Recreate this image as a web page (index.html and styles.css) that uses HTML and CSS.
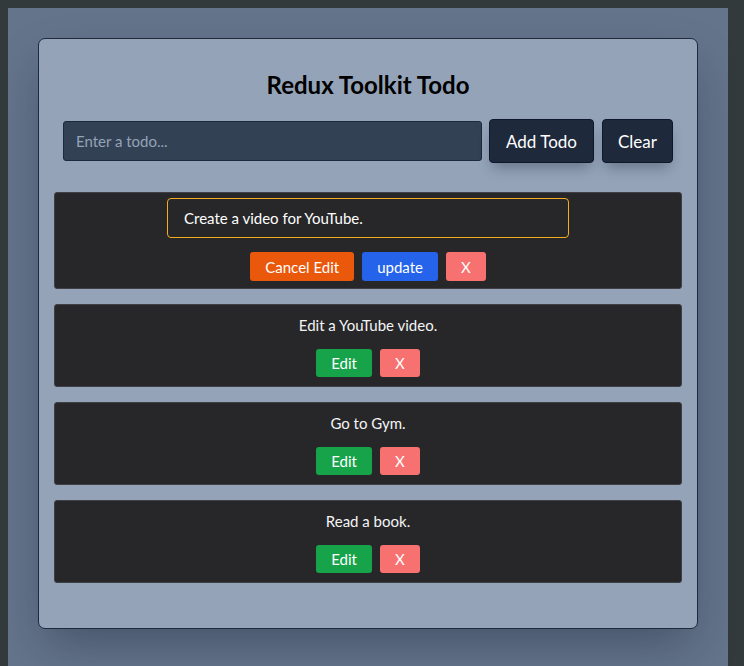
FILE: index.html
```html
<!DOCTYPE html>
<html lang="en">
<head>
<meta charset="utf-8">
<title>Redux Toolkit Todo</title>
<link rel="stylesheet" href="styles.css">
</head>
<body>
<div class="page">
  <div class="card">
    <h1 class="title">Redux Toolkit Todo</h1>
    <form class="add-form">
      <input class="add-input" type="text" placeholder="Enter a todo...">
      <button type="button" class="btn-dark">Add Todo</button>
      <button type="button" class="btn-dark">Clear</button>
    </form>
    <ul class="todo-list">
      <li class="todo editing">
        <input class="edit-input" type="text" value="Create a video for YouTube.">
        <div class="actions">
          <button type="button" class="btn btn-orange">Cancel Edit</button>
          <button type="button" class="btn btn-blue">update</button>
          <button type="button" class="btn btn-red">X</button>
        </div>
      </li>
      <li class="todo">
        <p class="todo-text">Edit a YouTube video.</p>
        <div class="actions">
          <button type="button" class="btn btn-green">Edit</button>
          <button type="button" class="btn btn-red">X</button>
        </div>
      </li>
      <li class="todo">
        <p class="todo-text">Go to Gym.</p>
        <div class="actions">
          <button type="button" class="btn btn-green">Edit</button>
          <button type="button" class="btn btn-red">X</button>
        </div>
      </li>
      <li class="todo">
        <p class="todo-text">Read a book.</p>
        <div class="actions">
          <button type="button" class="btn btn-green">Edit</button>
          <button type="button" class="btn btn-red">X</button>
        </div>
      </li>
    </ul>
  </div>
</div>
</body>
</html>
```
FILE: styles.css
```css
* { box-sizing: border-box; }
html, body { height: 100%; }
body {
  margin: 8px;
  background: #323a3c;
  font-family: "Lato", "Noto Sans", sans-serif;
  overflow: hidden;
}
.page {
  width: 720px;
  min-height: 658px;
  background: #64748b;
  padding: 30px;
}
.card {
  background: #94a3b8;
  border: 1px solid #1e293b;
  border-radius: 7px;
  padding: 0 15px 45px;
  box-shadow: 0 22px 45px -8px rgba(15, 23, 42, 0.35);
}
.title {
  margin: 0;
  padding-top: 31px;
  height: 80px;
  text-align: center;
  font-size: 24px;
  font-weight: 700;
  color: #000;
  line-height: 30px;
}
.add-form {
  display: flex;
  align-items: center;
  gap: 7px;
  margin: 0 9px;
  height: 44px;
}
.add-input {
  flex: 0 0 419px;
  height: 40px;
  background: #334155;
  border: 1px solid #1e293b;
  border-radius: 3px;
  padding: 0 12px;
  font-family: inherit;
  font-size: 15px;
  color: #e5e7eb;
  outline: none;
}
.add-input::placeholder { color: #94a3b8; }
.btn-dark {
  flex: 0 0 auto;
  white-space: nowrap;
  height: 44px;
  padding: 0 16px;
  margin-right: 1px;
  background: #1e293b;
  color: #fff;
  border: 1px solid #0f172a;
  border-radius: 4px;
  font-family: inherit;
  font-size: 17px;
  box-shadow: 0 8px 14px -4px rgba(15, 23, 42, 0.35);
}
.btn-dark:last-child { padding: 0 15px; margin-right: 0; }
.todo-list {
  list-style: none;
  margin: 29px 0 0;
  padding: 0;
  display: flex;
  flex-direction: column;
  gap: 15px;
}
.todo {
  background: #272729;
  border: 1px solid #3f3f46;
  border-radius: 3px;
  padding: 8px 8px 9px;
  display: flex;
  flex-direction: column;
  align-items: center;
}
.todo.editing { padding-top: 5px; padding-bottom: 7px; }
.todo-text {
  margin: 0;
  height: 24px;
  line-height: 24px;
  font-size: 15px;
  color: #f4f4f5;
}
.edit-input {
  width: 402px;
  height: 40px;
  background: #272729;
  border: 1.5px solid #f5ad1f;
  border-radius: 4px;
  padding: 0 16px;
  font-family: inherit;
  font-size: 15px;
  color: #fff;
  outline: none;
}
.actions {
  display: flex;
  gap: 8px;
  margin-top: 12px;
}
.editing .actions { margin-top: 14px; }
.btn {
  white-space: nowrap;
  height: 28px;
  padding: 0 15px;
  border: none;
  border-radius: 3px;
  color: #fff;
  font-family: inherit;
  font-size: 15px;
}
.editing .btn { height: 29px; }
.btn-green { background: #16a34a; }
.btn-red { background: #f87171; }
.btn-orange { background: #ea580c; }
.btn-blue { background: #2563eb; }
```
